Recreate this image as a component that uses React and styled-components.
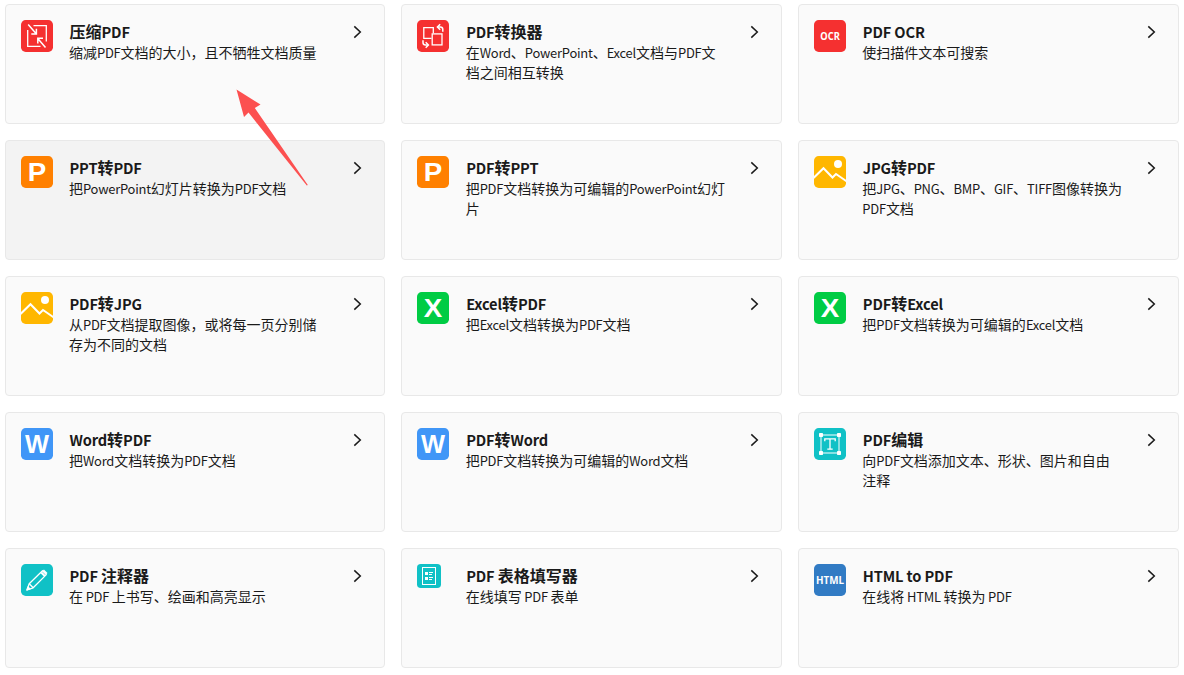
import React from "react";
import styled, { createGlobalStyle } from "styled-components";

const GlobalStyle = createGlobalStyle`
  *, *::before, *::after { box-sizing: border-box; }
  body {
    margin: 0;
    background: #fff;
    color: #1a1a1a;
    font-family: "Noto Sans CJK SC", "Noto Sans", sans-serif;
  }
`;

const Page = styled.main`
  position: relative;
  width: 1184px;
  height: 675px;
  padding: 4px 5.4px 0 4.6px;
  overflow: hidden;
`;

const ToolGrid = styled.div`
  display: grid;
  grid-template-columns: repeat(3, 1fr);
  grid-auto-rows: 120px;
  gap: 16px;
`;

const Card = styled.a`
  display: flex;
  align-items: flex-start;
  padding: 15px 15px 0;
  border: 1px solid #e8e8e8;
  border-radius: 4px;
  background: ${(p) => (p.$active ? "#f3f3f3" : "#fafafa")};
`;

const IconSlot = styled.div`
  flex: 0 0 48.4px;
  height: 32px;
`;

const IconSvg = styled.svg`
  display: block;
  width: ${(p) => p.$size}px;
  height: ${(p) => p.$size}px;
`;

const CardText = styled.div`
  width: 260px;
`;

const Latin = styled.span`
  font-size: 0.925em;
  line-height: 1;
  letter-spacing: -0.018em;
`;

const Title = styled.h3`
  margin: 0;
  height: 22px;
  padding-left: 0.5px;
  font-size: 16px;
  line-height: 22px;
  font-weight: 700;
  white-space: nowrap;

  ${Latin} {
    font-size: 0.915em;
    letter-spacing: -0.01em;
  }
`;

const Description = styled.p`
  margin: 0;
  font-size: 14px;
  line-height: 20px;
`;

const Chevron = styled.svg`
  width: 9px;
  height: 14px;
  margin: 5px 7px 0 auto;
`;

const Pointer = styled.svg`
  position: absolute;
  left: 230px;
  top: 85px;
  width: 84px;
  height: 106px;
  pointer-events: none;
`;

const humanist = "'Noto Sans', sans-serif";
const grotesque = "'Liberation Sans', Arial, sans-serif";

function Label({ children, size, y, family = humanist, length }) {
  return (
    <text
      x="16"
      y={y}
      textAnchor="middle"
      fontFamily={family}
      fontWeight="700"
      fontSize={size}
      fill="#fff"
      textLength={length}
      lengthAdjust="spacingAndGlyphs"
    >
      {children}
    </text>
  );
}

const line = { fill: "none", stroke: "#fff", strokeWidth: 1.3 };

const icons = {
  compress: {
    color: "#f53030",
    art: (
      <g {...line}>
        <path d="M12.5 5.7H25.3V21.5M19.5 26.3H6.7V10" />
        <path d="M7.2 4.5L15 13.5M10.3 14H15.4V8.8" strokeWidth="1.5" />
        <path d="M24.5 27.5L17 18.8M22 18.2H16.8V23.5" strokeWidth="1.5" />
      </g>
    ),
  },
  convert: {
    color: "#f53030",
    art: (
      <g {...line}>
        <path d="M14.5 18.3H6.8V7.6H16.3V13.2" />
        <rect x="15.2" y="13.9" width="9.8" height="11" />
        <path d="M20.7 7H23.3Q25.8 7 25.8 9.5V11.8" strokeWidth="1.5" />
        <path d="M23.2 4.3L20.4 7L23.2 9.7" strokeWidth="1.5" />
        <path d="M6 20.3V22.5Q6 25 8.5 25H11" strokeWidth="1.5" />
        <path d="M8.7 22.3L11.4 25L8.7 27.7" strokeWidth="1.5" />
      </g>
    ),
  },
  ocr: { color: "#f53030", art: <Label size={10} y={20.2} length={19.5}>OCR</Label> },
  ppt: { color: "#ff8000", art: <Label size={26} y={25.2} family={grotesque} length={18.5}>P</Label> },
  image: {
    color: "#ffb700",
    art: (
      <>
        <circle cx="24" cy="8" r="4" fill="#fff" />
        <path d="M-.5 22L9.5 12.2L18.5 21.5L22 18L32.5 25.3" fill="none" stroke="#fff" strokeWidth="2" />
      </>
    ),
  },
  excel: { color: "#00cc44", art: <Label size={26} y={25} family={grotesque} length={18.5}>X</Label> },
  word: { color: "#4096f7", art: <Label size={26} y={25} family={grotesque} length={24}>W</Label> },
  edit: {
    color: "#10c1c6",
    art: (
      <>
        <rect x="7" y="7" width="18" height="18" {...line} strokeWidth="1" />
        <g fill="#fff">
          <rect x="5" y="5" width="4" height="4" rx=".7" />
          <rect x="23" y="5" width="4" height="4" rx=".7" />
          <rect x="5" y="23" width="4" height="4" rx=".7" />
          <rect x="23" y="23" width="4" height="4" rx=".7" />
        </g>
        <path d="M10.8 13.2V10.8H21.2V13.2M16 10.8V21.2M13.3 21.2H18.7" {...line} strokeWidth="1.3" />
      </>
    ),
  },
  annotate: {
    color: "#10c1c6",
    art: (
      <g {...line} strokeWidth="1.3" strokeLinejoin="round">
        <path d="M6 26L8.2 19.7L21.5 6.8L25.3 10.6L12.2 23.8Z" />
        <path d="M8.2 19.7L12.2 23.8" />
        <path d="M20.3 8.5L23.8 12" strokeWidth="2" />
        <path d="M22.2 6.2L25.8 9.8" strokeWidth="2" />
        <path d="M6 26L7 23L9 25Z" fill="#fff" />
      </g>
    ),
  },
  form: {
    color: "#10c1c6",
    size: 24,
    art: (
      <g transform="scale(1.33333)">
        <rect x="5.5" y="3.5" width="13" height="17" {...line} strokeWidth="1" />
        <rect x="8" y="8" width="3" height="3" fill="#fff" />
        <rect x="8" y="13" width="3" height="3" fill="#fff" />
        <path d="M12 8.5H16M12 10.5H15M12 13.5H16M12 15.5H15" {...line} strokeWidth="1" />
      </g>
    ),
  },
  html: { color: "#317bc4", art: <Label size={10.8} y={20.2} length={28}>HTML</Label> },
};

function ToolIcon({ name }) {
  const { color, art, size = 32 } = icons[name];
  return (
    <IconSvg $size={size} viewBox="0 0 32 32" aria-hidden="true">
      <rect width="32" height="32" rx={size === 32 ? 4.7 : 5} fill={color} />
      {art}
    </IconSvg>
  );
}

// Latin runs are set slightly tighter than the Chinese text around them.
function MixedText({ children }) {
  return children
    .split(/([A-Za-z ]+)/)
    .map((part, i) => (i % 2 ? <Latin key={i}>{part}</Latin> : part));
}

const tools = [
  ["compress", "压缩PDF", "缩减PDF文档的大小，且不牺牲文档质量"],
  ["convert", "PDF转换器", "在Word、PowerPoint、Excel文档与PDF文档之间相互转换"],
  ["ocr", "PDF OCR", "使扫描件文本可搜索"],
  ["ppt", "PPT转PDF", "把PowerPoint幻灯片转换为PDF文档", true],
  ["ppt", "PDF转PPT", "把PDF文档转换为可编辑的PowerPoint幻灯片"],
  ["image", "JPG转PDF", "把JPG、PNG、BMP、GIF、TIFF图像转换为PDF文档"],
  ["image", "PDF转JPG", "从PDF文档提取图像，或将每一页分别储存为不同的文档"],
  ["excel", "Excel转PDF", "把Excel文档转换为PDF文档"],
  ["excel", "PDF转Excel", "把PDF文档转换为可编辑的Excel文档"],
  ["word", "Word转PDF", "把Word文档转换为PDF文档"],
  ["word", "PDF转Word", "把PDF文档转换为可编辑的Word文档"],
  ["edit", "PDF编辑", "向PDF文档添加文本、形状、图片和自由注释"],
  ["annotate", "PDF 注释器", "在 PDF 上书写、绘画和高亮显示"],
  ["form", "PDF 表格填写器", "在线填写 PDF 表单"],
  ["html", "HTML to PDF", "在线将 HTML 转换为 PDF"],
];

export default function App() {
  return (
    <Page lang="zh-CN">
      <GlobalStyle />
      <ToolGrid>
        {tools.map(([icon, title, description, active]) => (
          <Card key={title} $active={active}>
            <IconSlot>
              <ToolIcon name={icon} />
            </IconSlot>
            <CardText>
              <Title><MixedText>{title}</MixedText></Title>
              <Description><MixedText>{description}</MixedText></Description>
            </CardText>
            <Chevron viewBox="0 0 9 14" aria-hidden="true">
              <path d="M1.3 1.4L7.3 7L1.3 12.6" fill="none" stroke="#1a1a1a" strokeWidth="1.5" />
            </Chevron>
          </Card>
        ))}
      </ToolGrid>
      <Pointer viewBox="0 0 84 106" aria-hidden="true">
        <path d="M6.5 4.5L30.5 19.5L24.8 23L77.8 100L76.8 100.6L18.5 27.5L14 32Z" fill="#fc5050" />
      </Pointer>
    </Page>
  );
}
